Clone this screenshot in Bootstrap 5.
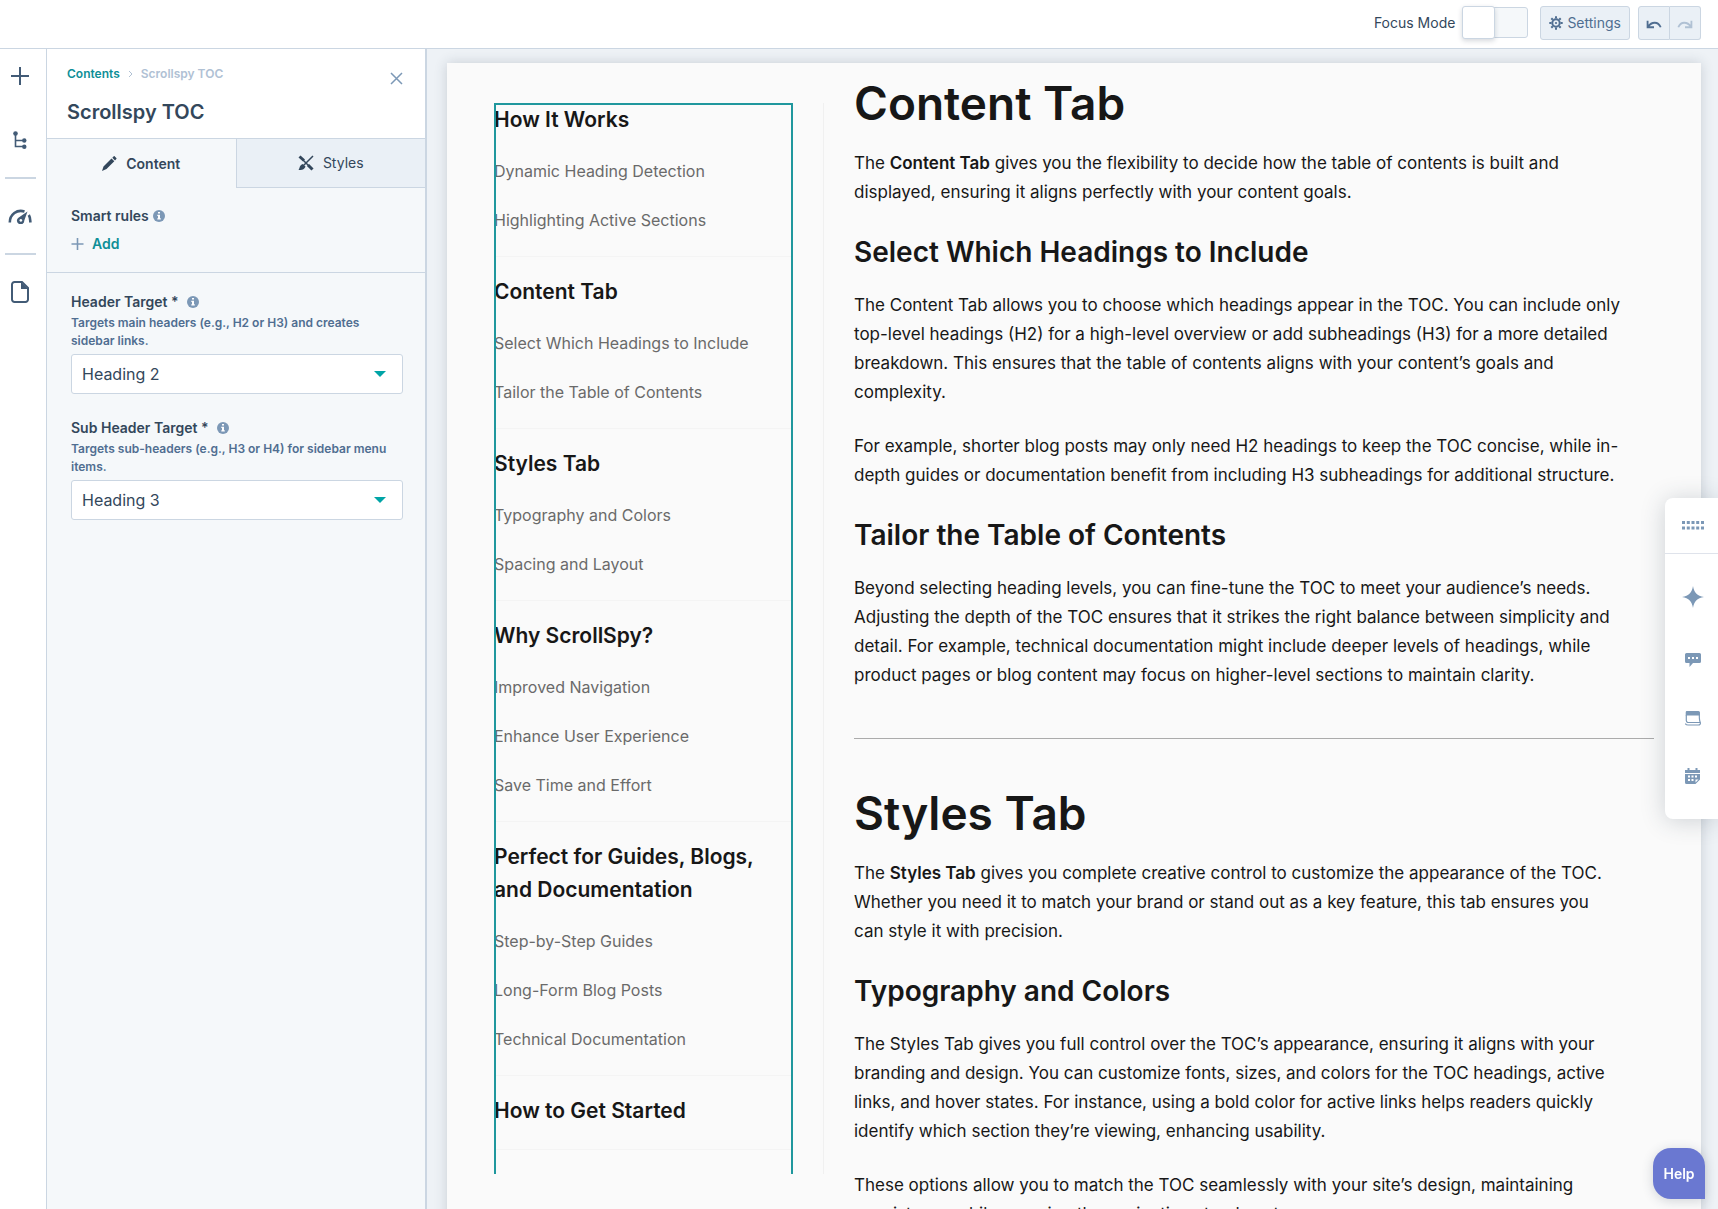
<!DOCTYPE html>
<html lang="en">
<head>
<meta charset="utf-8">
<meta name="viewport" content="width=device-width, initial-scale=1">
<title>Scrollspy TOC</title>
<link href="https://cdn.jsdelivr.net/npm/bootstrap@5.3.0/dist/css/bootstrap.min.css" rel="stylesheet">
<style>
  :root { --ink:#33475b; --slate:#506e91; --steel:#7c98b6; --line:#cbd6e2; --teal:#0e8f97; }
  body { font-family:Inter,"Noto Sans",sans-serif; color:var(--ink); background:#eef2f6; }
  a { text-decoration:none; }
  svg { display:block; flex:none; }
  .topbar { height:49px; border-bottom:1px solid var(--line); padding:0 17px 3px 0; font-size:14px; }
  .focus-switch { width:66px; height:31px; margin:0 12px 0 7px; appearance:none; background:#f5f8fa; border:1px solid var(--line); border-radius:3px; position:relative; }
  .focus-switch::before { content:""; position:absolute; left:-1px; top:-2px; width:33px; height:33px; background:#fff; border:1px solid var(--line); border-radius:3px; box-shadow:0 2px 5px rgba(45,62,80,.2); }
  .tool-btn { height:34px; padding:0 8px; background:#eaf0f6; border:1px solid var(--line); border-radius:3px; color:var(--slate); font-size:14px; display:flex; align-items:center; gap:4px; }
  .tool-btn:disabled { opacity:1; background:#eaf0f6; border-color:var(--line); color:#b0c1d4; }
  .tool-btn.history { padding:4px 7px 0; }
  .rail { width:47px; border-right:1px solid var(--line); color:#425b76; }
  .rail button, .dock button { border:0; background:none; padding:0; color:inherit; display:flex; align-items:center; justify-content:center; }
  .rail button { width:40px; height:38px; margin:18px 0; }
  .rail button:first-child { margin:0 0 26px; }
  .rail hr { width:31px; margin:0 0 0 5px; border-top:2px solid var(--line); opacity:1; }
  .panel { width:380px; background:#f5f8fa; border-right:2px solid var(--line); }
  .panel-head { padding:16px 20px 0; height:90px; border-bottom:1px solid var(--line); background:#fff; }
  .crumbs { font-size:12px; line-height:18px; font-weight:600; color:#b0c1d4; gap:8px; }
  .crumbs a, .add-rule { color:var(--teal); }
  .panel-title { font-size:20px; line-height:26px; font-weight:600; margin:16px 0 0; }
  .close-btn { border:0; background:none; padding:7px 2px; color:var(--steel); }
  .panel-tabs button { flex:1; height:49px; border:0; background:none; color:var(--ink); font-size:14px; line-height:20px; gap:9px; border-radius:0; }
  .panel-tabs button.inactive { background:#eaf0f6; border-left:1px solid var(--line); border-bottom:1px solid var(--line); }
  .rules { padding:18px 24px; border-bottom:1px solid var(--line); }
  .field-label { font-size:14px; line-height:20px; font-weight:600; margin:0; }
  .add-rule { border:0; background:none; padding:0; font-size:14px; line-height:20px; font-weight:600; gap:8px; margin-top:8px; }
  .fields { padding:19px 22px 0 24px; }
  .field-note { font-size:12px; line-height:18px; font-weight:600; color:var(--slate); margin:2px 0 4px; }
  .field-select { height:40px; border:1px solid var(--line); border-radius:3px; padding:0 36px 0 10px; font-size:16px; color:var(--ink); background-image:url("data:image/svg+xml,%3Csvg xmlns='http://www.w3.org/2000/svg' viewBox='0 0 12 6'%3E%3Cpath d='M0 0h12L6 6z' fill='%2300a4a6'/%3E%3C/svg%3E"); background-size:12px 6px; background-position:right 16px center; }
  .field-group { margin-bottom:24px; }
  .canvas { background:#eef2f6; padding:14px 17px 0 20px; overflow:hidden; }
  .sheet { background:#fafafa; box-shadow:0 0 12px rgba(45,62,80,.2); min-height:100%; padding:0 47px; color:#171717; }
  .toc-col { width:330px; flex:none; margin-top:40px; height:calc(100vh - 138px); border-right:1px solid #f0f0f0; padding-right:30px; }
  .toc { position:relative; height:100%; overflow:hidden; }
  .toc::after { content:""; position:absolute; inset:0; border:2px solid #1f979d; border-bottom:0; pointer-events:none; }
  .toc-group { border-bottom:1px solid #f4f4f4; margin-bottom:18px; }
  .toc-title { font-size:21px; line-height:33px; font-weight:600; margin:0 0 22px; }
  .toc-title a { color:#171717; }
  .toc-group ul { list-style:none; margin:0; padding:0; }
  .toc-group li { font-size:16px; line-height:27px; margin-bottom:22px; }
  .toc-group li a { color:#6a6a6a; }
  .article { padding:13px 0 0 30px; min-width:0; }
  .article h2 { font-size:46px; line-height:54px; font-weight:600; margin:0 0 19px; }
  .article h3 { font-size:28px; line-height:34px; font-weight:600; margin:28px 0 22px; }
  .article p { font-size:17px; line-height:29px; margin:0 0 25px; padding-right:28px; }
  .article strong { font-weight:600; }
  .article hr { margin:48px 0 47px; border-color:#777; opacity:.6; }
  .dock { position:fixed; right:0; top:498px; width:53px; background:#fff; border-radius:8px 0 0 8px; box-shadow:0 2px 24px rgba(45,62,80,.22); color:var(--steel); padding-bottom:14px; }
  .dock button { width:100%; height:58px; padding-left:2px; }
  .dock .grip { height:56px; border-bottom:1px solid #dfe3eb; margin-bottom:14px; }
  .dock .assistant { margin-bottom:5px; }
  .help-btn { position:fixed; right:13px; bottom:10px; width:52px; height:51px; border:0; border-radius:18px 18px 0 18px; background:#6a78d1; color:#fff; font-size:14px; font-weight:600; box-shadow:0 2px 12px rgba(45,62,80,.2); }
</style>
<script src="https://cdn.jsdelivr.net/npm/bootstrap@5.3.0/dist/js/bootstrap.bundle.min.js"></script>
</head>
<body class="vh-100 d-flex flex-column overflow-hidden">
<header class="topbar bg-white d-flex align-items-center justify-content-end flex-shrink-0">
  <label for="focus">Focus Mode</label>
  <input type="checkbox" role="switch" id="focus" class="focus-switch">
  <button class="tool-btn" type="button">
    <svg width="14" height="14" viewBox="0 0 14 14" fill="none" stroke="currentColor"><circle cx="7" cy="7" r="3.7" stroke-width="2"/><circle cx="7" cy="7" r="1.1" fill="currentColor" stroke="none"/><path stroke-width="2" d="M7 .3v2.2M7 11.500v2.200M.3 7h2.200M11.500 7h2.200M2.300 2.300l1.500 1.500M10.200 10.200l1.500 1.500M2.300 11.700l1.500-1.500M10.200 3.800l1.500-1.500"/></svg>
    Settings</button>
  <div class="btn-group ms-2" role="group" aria-label="History">
    <button class="tool-btn history rounded-end-0" type="button" aria-label="Undo"><svg width="16" height="11" viewBox="0 0 17 12" fill="none" stroke="currentColor" stroke-width="2"><path d="M1.500 2v7h7M2 8.500C6 2.500 13 2.500 15.800 9"/></svg></button>
    <button class="tool-btn history rounded-start-0 border-start-0" type="button" aria-label="Redo" disabled><svg width="16" height="11" viewBox="0 0 17 12" fill="none" stroke="currentColor" stroke-width="2"><path d="M15.500 2v7h-7M15 8.500C11 2.500 4 2.500 1.200 9"/></svg></button>
  </div>
</header>
<div class="d-flex flex-grow-1 overflow-hidden">
  <nav class="rail bg-white flex-shrink-0 pt-2" aria-label="Editor tools">
    <button type="button" aria-label="Add"><svg width="18" height="18" viewBox="0 0 18 18" stroke="currentColor" stroke-width="2"><path d="M9 0v18M0 9h18"/></svg></button>
    <button type="button" aria-label="Contents"><svg width="14" height="19" viewBox="0 0 14 19" fill="none" stroke="currentColor" stroke-width="1.600"><path d="M2.500 3v12.500H11M2.500 9.500H11"/><g fill="currentColor" stroke="none"><circle cx="2.500" cy="2.500" r="2.300"/><circle cx="11.300" cy="9.500" r="2.200"/><circle cx="11.300" cy="15.800" r="2.200"/></g></svg></button>
    <hr>
    <button type="button" aria-label="Optimize"><svg width="24" height="15" viewBox="0 0 24 15" fill="none" stroke="currentColor"><path stroke-width="2.600" d="M1.800 13.500C1.800 5.500 9 0 16.500 2.500M20.800 6c1.200 2 1.700 4.500 1.500 7.500"/><path fill="currentColor" stroke="none" fill-rule="evenodd" d="M19.500 2.500 16.300 11.500a3.700 3.700 0 1 1-5.900-2.800zM12.800 10a1.400 1.400 0 1 0 .1 0z"/></svg></button>
    <hr>
    <button type="button" aria-label="Page"><svg width="18" height="22" viewBox="0 0 18 22"><path fill="none" stroke="currentColor" stroke-width="2" d="M3.500 1H11l6 6v11.500A2.500 2.500 0 0 1 14.500 21h-11A2.500 2.500 0 0 1 1 18.500v-15A2.500 2.500 0 0 1 3.500 1z"/><path fill="currentColor" d="M10 1l7 7h-7z"/></svg></button>
  </nav>
  <aside class="panel flex-shrink-0">
    <div class="panel-head d-flex justify-content-between align-items-start">
      <div>
        <nav class="crumbs d-flex align-items-center" aria-label="Breadcrumb"><a href="#">Contents</a><svg width="5" height="8" viewBox="0 0 5 8" fill="none" stroke="currentColor"><path d="M1 1l3 3-3 3"/></svg><span>Scrollspy TOC</span></nav>
        <h1 class="panel-title">Scrollspy TOC</h1>
      </div>
      <button class="close-btn" type="button" aria-label="Close"><svg width="13" height="13" viewBox="0 0 13 13" stroke="currentColor" stroke-width="1.500"><path d="M1 1l11 11M12 1L1 12"/></svg></button>
    </div>
    <div class="panel-tabs d-flex" role="tablist">
      <button type="button" role="tab" aria-selected="true" class="d-flex align-items-center justify-content-center fw-semibold"><svg width="15" height="15" viewBox="0 0 15 15" fill="currentColor"><path d="M0 15l1.500-4.500 8-8 2.800 2.800L4.500 13zM10.300 1.700 11.600.4c.4-.4.8-.4 1.200 0l1.500 1.500c.4.4.4.8 0 1.200L13 4.500z"/></svg>Content</button>
      <button type="button" role="tab" aria-selected="false" class="inactive d-flex align-items-center justify-content-center"><svg width="16" height="16" viewBox="0 0 16 16" fill="none" stroke="currentColor"><path stroke-width="3" d="M1.500 1.500l4.500 4M10 10l4.500 4.500"/><path stroke-width="1.500" d="M5 5l6 6M15 1L6 10"/><path fill="currentColor" stroke="none" d="M5 9l2.500 2.500C6.500 14.500 4 15 .5 15c1.500-1.500.5-5 4.500-6z"/></svg>Styles</button>
    </div>
    <section class="rules">
      <div class="d-flex align-items-center gap-1"><span class="field-label">Smart rules</span><svg width="12" height="12" viewBox="0 0 12 12"><circle cx="6" cy="6" r="6" fill="#7c98b6"/><path fill="#fff" d="M5 2h2v1.600H5zM4.300 4.700H7v3.500h.8v1.200H4.300V8.200H5V5.900h-.7z"/></svg></div>
      <button type="button" class="add-rule d-flex align-items-center"><svg width="13" height="12" viewBox="0 0 12 12" stroke="#7c98b6" stroke-width="1.600"><path d="M6 0v12M0 6h12"/></svg>Add</button>
    </section>
    <form class="fields">
      <div class="field-group">
        <div class="d-flex align-items-center gap-2"><label class="field-label" for="head">Header Target *</label><svg width="12" height="12" viewBox="0 0 12 12"><circle cx="6" cy="6" r="6" fill="#7c98b6"/><path fill="#fff" d="M5 2h2v1.600H5zM4.300 4.700H7v3.500h.8v1.200H4.300V8.200H5V5.900h-.7z"/></svg></div>
        <p class="field-note">Targets main headers (e.g., H2 or H3) and creates sidebar links.</p>
        <select id="head" class="form-select field-select"><option>Heading 2</option></select>
      </div>
      <div class="field-group">
        <div class="d-flex align-items-center gap-2"><label class="field-label" for="subhead">Sub Header Target *</label><svg width="12" height="12" viewBox="0 0 12 12"><circle cx="6" cy="6" r="6" fill="#7c98b6"/><path fill="#fff" d="M5 2h2v1.600H5zM4.300 4.700H7v3.500h.8v1.200H4.300V8.200H5V5.900h-.7z"/></svg></div>
        <p class="field-note">Targets sub-headers (e.g., H3 or H4) for sidebar menu items.</p>
        <select id="subhead" class="form-select field-select"><option>Heading 3</option></select>
      </div>
    </form>
  </aside>
  <main class="canvas flex-grow-1">
    <div class="sheet d-flex align-items-start">
      <div class="toc-col">
        <nav class="toc" aria-label="Table of contents">
          <section class="toc-group"><h4 class="toc-title"><a href="#">How It Works</a></h4><ul><li><a href="#">Dynamic Heading Detection</a></li><li><a href="#">Highlighting Active Sections</a></li></ul></section>
          <section class="toc-group"><h4 class="toc-title"><a href="#content">Content Tab</a></h4><ul><li><a href="#">Select Which Headings to Include</a></li><li><a href="#">Tailor the Table of Contents</a></li></ul></section>
          <section class="toc-group"><h4 class="toc-title"><a href="#styles">Styles Tab</a></h4><ul><li><a href="#">Typography and Colors</a></li><li><a href="#">Spacing and Layout</a></li></ul></section>
          <section class="toc-group"><h4 class="toc-title"><a href="#">Why ScrollSpy?</a></h4><ul><li><a href="#">Improved Navigation</a></li><li><a href="#">Enhance User Experience</a></li><li><a href="#">Save Time and Effort</a></li></ul></section>
          <section class="toc-group"><h4 class="toc-title"><a href="#">Perfect for Guides, Blogs, and&nbsp;Documentation</a></h4><ul><li><a href="#">Step-by-Step Guides</a></li><li><a href="#">Long-Form Blog Posts</a></li><li><a href="#">Technical Documentation</a></li></ul></section>
          <section class="toc-group"><h4 class="toc-title"><a href="#">How to Get Started</a></h4></section>
        </nav>
      </div>
      <article class="article flex-grow-1">
        <h2 id="content">Content Tab</h2>
        <p>The <strong>Content Tab</strong> gives you the flexibility to decide how the table of contents is built and displayed, ensuring it aligns perfectly with your content goals.</p>
        <h3>Select Which Headings to Include</h3>
        <p>The Content Tab allows you to choose which headings appear in the TOC. You can include only top-level headings (H2) for a high-level overview or add subheadings (H3) for a more detailed breakdown. This ensures that the table of contents aligns with your content’s goals and complexity.</p>
        <p>For example, shorter blog posts may only need H2 headings to keep the TOC concise, while in-depth guides or documentation benefit from including H3 subheadings for additional structure.</p>
        <h3>Tailor the Table of Contents</h3>
        <p>Beyond selecting heading levels, you can fine-tune the TOC to meet your audience’s needs. Adjusting the depth of the TOC ensures that it strikes the right balance between simplicity and detail. For example, technical documentation might include deeper levels of headings, while product pages or blog content may focus on higher-level sections to maintain clarity.</p>
        <hr>
        <h2 id="styles">Styles Tab</h2>
        <p>The <strong>Styles Tab</strong> gives you complete creative control to customize the appearance of the TOC. Whether you need it to match your brand or stand out as a key feature, this tab ensures you can&nbsp;style it with precision.</p>
        <h3>Typography and Colors</h3>
        <p>The Styles Tab gives you full control over the TOC’s appearance, ensuring it aligns with your branding and design. You can customize fonts, sizes, and colors for the TOC headings, active links, and hover states. For instance, using a bold color for active links helps readers quickly identify which section they’re viewing, enhancing usability.</p>
        <p>These options allow you to match the TOC seamlessly with your site’s design, maintaining consistency while ensuring the navigation stands out.</p>
      </article>
    </div>
  </main>
</div>
<aside class="dock" aria-label="Quick tools">
  <button class="grip" type="button" aria-label="Move"><svg width="22" height="9" viewBox="0 0 22 9" fill="currentColor"><path d="M0 0h3v3H0zM4.800 0h3v3h-3zM9.500 0h3v3h-3zM14.200 0h3v3h-3zM19 0h3v3h-3zM0 5.500h3v3H0zM4.800 5.500h3v3h-3zM9.500 5.500h3v3h-3zM14.200 5.500h3v3h-3zM19 5.500h3v3h-3z"/></svg></button>
  <button class="assistant" type="button" aria-label="Assistant"><svg width="22" height="22" viewBox="0 0 22 22" fill="currentColor"><path d="M11 0c1 6.500 4 9.800 11 11-7 1.200-10 4.500-11 11-1-6.500-4-9.800-11-11C7 9.800 10 6.500 11 0z"/></svg></button>
  <button type="button" aria-label="Comments"><svg width="16" height="14" viewBox="0 0 16 14"><path fill="currentColor" d="M1.500 0h13A1.500 1.500 0 0 1 16 1.500v7a1.500 1.500 0 0 1-1.500 1.500H8l-3.500 4V10h-3A1.500 1.500 0 0 1 0 8.500v-7A1.500 1.500 0 0 1 1.500 0z"/><path fill="#fff" d="M3 4h2v2H3zM7 4h2v2H7zM11 4h2v2h-2z"/></svg></button>
  <button type="button" aria-label="Records"><svg width="16" height="15" viewBox="0 0 16 15" fill="none" stroke="currentColor" stroke-width="1.200"><path d="M1.300 4v5.500c0 1 .5 1.500 1.300 2h12.200M14.300 4c0 4 .2 6 1 7.500.4 1.500-.5 2.500-2 2.500H3C1.800 14 .8 13.500.3 12.500"/><path fill="currentColor" stroke="none" d="M2.500 0h11A1.500 1.500 0 0 1 15 1.500v3H.7v-3A1.500 1.500 0 0 1 2.500 0z"/></svg></button>
  <button type="button" aria-label="Calendar"><svg width="15" height="16" viewBox="0 0 15 16"><path fill="currentColor" d="M2.500 0h2v2h6V0h2v2H15v3H0V2h2.500zM0 6h15v5.500L10.500 16H1.500A1.500 1.500 0 0 1 0 14.500z"/><path fill="#fff" d="M3 7.500h2v2H3zM6.500 7.500h2v2h-2zM10 7.500h2v2h-2zM3 11h2v2H3zM6.500 11h2v2h-2zM10.500 11.500h3l-3 3z"/></svg></button>
</aside>
<button class="help-btn" type="button">Help</button>
</body>
</html>
